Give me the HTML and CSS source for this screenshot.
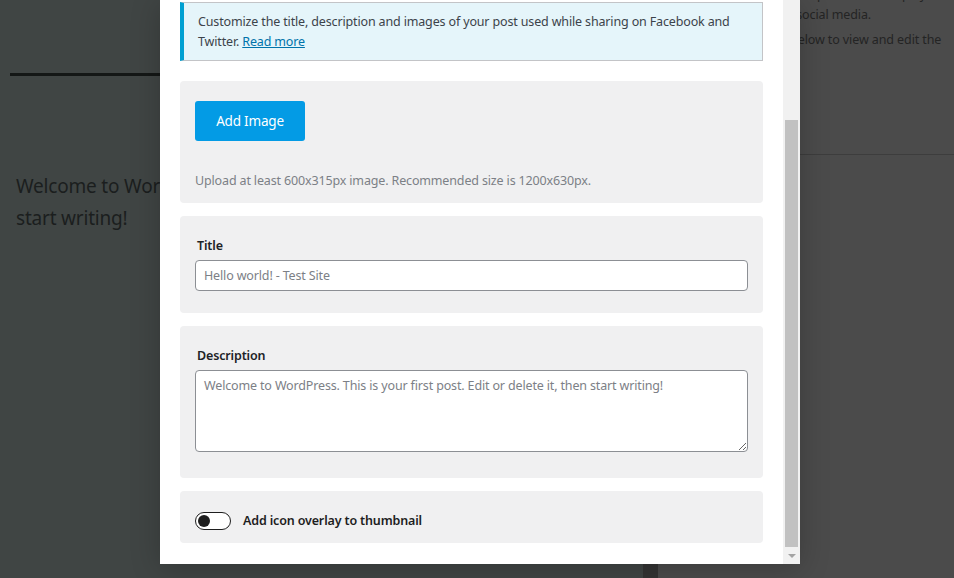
FILE: index.html
```html
<!DOCTYPE html>
<html lang="en">
<head>
<meta charset="utf-8">
<title>Social preview</title>
<link rel="stylesheet" href="styles.css">
</head>
<body>
<div class="editor">
  <main class="canvas">
    <div class="title-rule"></div>
    <p class="post-text">Welcome to WordPress. This is your first post. Edit or delete it, then<br>start writing!</p>
  </main>
  <aside class="sidebar">
    <div class="panel">
      <p>Customize how your post will be displayed when<br>post is shown on social media.</p>
      <p>Click the button below to view and edit the</p>
    </div>
  </aside>
</div>

<div class="modal">
  <div class="modal-body">
    <div class="notice">
      Customize the title, description and images of your post used while sharing on Facebook and Twitter. <a href="#">Read more</a>
    </div>

    <section class="card card-image">
      <button class="btn-primary" type="button">Add Image</button>
      <p class="hint">Upload at least 600x315px image. Recommended size is 1200x630px.</p>
    </section>

    <section class="card card-field">
      <label class="field-label" for="t">Title</label>
      <input id="t" class="text-input" type="text" placeholder="Hello world! - Test Site">
    </section>

    <section class="card card-field card-desc">
      <label class="field-label" for="d">Description</label>
      <textarea id="d" class="text-area" placeholder="Welcome to WordPress. This is your first post. Edit or delete it, then start writing!"></textarea>
    </section>

    <section class="card card-toggle">
      <span class="toggle"><span class="knob"></span></span>
      <span class="toggle-label">Add icon overlay to thumbnail</span>
    </section>
  </div>
  <div class="scrollbar">
    <div class="thumb"></div>
    <div class="arrow"></div>
  </div>
</div>
</body>
</html>
```

FILE: styles.css
```css
* { box-sizing: border-box; }

html, body {
  margin: 0;
  padding: 0;
  width: 954px;
  height: 578px;
  overflow: hidden;
  font-family: "Noto Sans", "Open Sans", sans-serif;
}

body { position: relative; }

.editor {
  display: flex;
  height: 578px;
}

.canvas {
  width: 643px;
  flex: none;
  background: #404544;
  padding: 73px 0 0 10px;
  overflow: hidden;
}

.title-rule {
  height: 3px;
  background: #141716;
  width: 620px;
}

.post-text {
  margin: 94px 0 0 6px;
  font-size: 19px;
  letter-spacing: -0.2px;
  line-height: 32px;
  color: #1b1e1e;
  white-space: nowrap;
}

.sidebar {
  flex: 1;
  background: #4b4b4b;
  border-left: 15px solid #343434;
}

.panel {
  height: 170px;
  border-bottom: 1px solid #3d3d3d;
  padding: 0 0 0 38px;
  margin-top: -15px;
  font-size: 12.5px;
  letter-spacing: -0.1px;
  line-height: 20px;
  color: #242424;
}

.panel p {
  margin: 0 0 5px;
  white-space: nowrap;
}

.modal {
  position: absolute;
  left: 160px;
  top: 0;
  width: 640px;
  height: 564px;
  background: #fff;
  display: flex;
  box-shadow: 0 4px 28px rgba(0, 0, 0, 0.22);
}

.modal-body {
  flex: 1;
  padding: 2px 20px 0;
  display: flex;
  flex-direction: column;
  gap: 13px;
  color: #1e1e1e;
  font-size: 12.5px;
  letter-spacing: -0.15px;
  line-height: 20px;
}

.notice {
  background: #e5f5fa;
  border: 1px solid #c3c4c7;
  border-left: 4px solid #00a0d2;
  padding: 9px 14px 8px;
  color: #3c434a;
  margin-bottom: 7px;
}

.notice a {
  color: #0073aa;
  text-decoration: underline;
}

.card {
  background: #f0f0f1;
  border-radius: 4px;
  padding: 0 15px;
}

.card-image {
  padding-top: 20px;
  padding-bottom: 12px;
}

.btn-primary {
  display: block;
  width: 110px;
  height: 40px;
  border: 0;
  border-radius: 3px;
  background: #039be5;
  color: #fff;
  font-family: inherit;
  font-size: 13.5px;
  letter-spacing: -0.2px;
  padding: 0;
}

.hint {
  margin: 30px 0 0;
  font-size: 12.5px;
  letter-spacing: -0.15px;
  line-height: 20px;
  color: #7c8086;
}

.card-field {
  padding-top: 20px;
  padding-bottom: 22px;
}

.card-desc { padding-bottom: 26px; }

.field-label {
  display: block;
  font-weight: 600;
  color: #1d2327;
  padding-left: 2px;
  margin-bottom: 4px;
}

.text-input,
.text-area {
  display: block;
  width: 100%;
  border: 1px solid #8c8f94;
  border-radius: 4px;
  background: #fff;
  font-family: inherit;
  font-size: 12.5px;
  letter-spacing: -0.15px;
  color: #2c3338;
  margin: 0;
}

.text-input {
  height: 31px;
  padding: 0 8px;
}

.text-area {
  height: 82px;
  padding: 5px 8px;
  line-height: 20px;
  resize: vertical;
}

.text-input::placeholder,
.text-area::placeholder {
  color: #7c8086;
  opacity: 1;
}

.card-toggle {
  display: flex;
  align-items: center;
  gap: 12px;
  padding-top: 20px;
  padding-bottom: 12px;
}

.toggle {
  position: relative;
  width: 36px;
  height: 18px;
  border: 1px solid #1e1e1e;
  border-radius: 9px;
  background: #fff;
  flex: none;
}

.knob {
  position: absolute;
  left: 2px;
  top: 2px;
  width: 12px;
  height: 12px;
  border-radius: 50%;
  background: #1e1e1e;
}

.toggle-label {
  font-weight: 600;
  color: #1e1e1e;
  line-height: 20px;
}

.scrollbar {
  width: 17px;
  flex: none;
  background: #f1f1f1;
  display: flex;
  flex-direction: column;
  align-items: center;
  padding-top: 120px;
}

.thumb {
  width: 13px;
  height: 427px;
  background: #c1c1c1;
}

.arrow {
  margin-top: 7px;
  width: 0;
  height: 0;
  border-left: 4px solid transparent;
  border-right: 4px solid transparent;
  border-top: 4px solid #a3a3a3;
}
```
